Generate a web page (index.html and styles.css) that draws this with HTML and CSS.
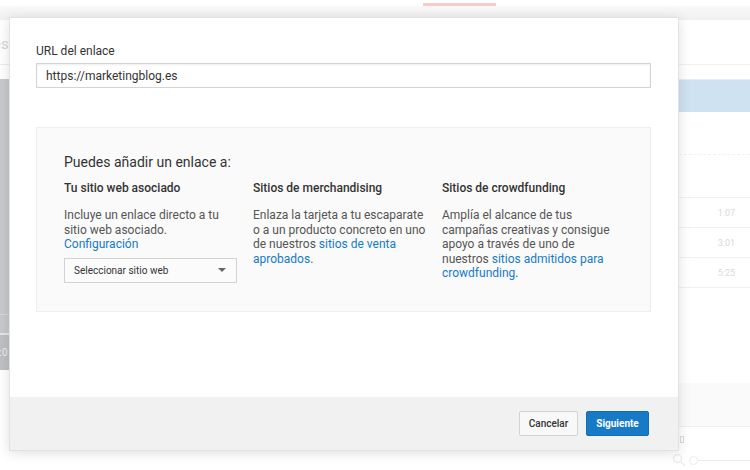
FILE: index.html
```html
<!DOCTYPE html>
<html lang="es">
<head>
<meta charset="utf-8">
<title>Añadir enlace</title>
<link rel="stylesheet" href="styles.css">
</head>
<body>
<div class="page">
  <div class="topbar"><span class="topbar-accent"></span></div>
  <div class="columns">
    <div class="left-col">
      <div class="left-head"><span class="left-title">es</span></div>
      <div class="thumb">
        <div class="thumb-line"></div>
        <div class="thumb-bottom"><span class="thumb-time">0:0</span></div>
      </div>
    </div>
    <div class="mid-col"></div>
    <div class="right-col">
      <div class="r-head"></div>
      <div class="r-selected"></div>
      <div class="r-gap"></div>
      <div class="r-gap2"></div>
      <div class="r-row"><span class="r-time">1:07</span></div>
      <div class="r-row"><span class="r-time">3:01</span></div>
      <div class="r-row"><span class="r-time">5:25</span></div>
      <div class="r-space"></div>
      <div class="r-band"></div>
      <div class="r-tools">
        <span class="r-box"></span>
      </div>
      <div class="r-zoom">
        <svg class="r-mag" width="14" height="14" viewBox="0 0 14 14"><circle cx="5.5" cy="5.5" r="4" fill="none" stroke="#ececec" stroke-width="1.4"/><line x1="8.5" y1="8.5" x2="13" y2="13" stroke="#ececec" stroke-width="1.6"/></svg>
        <span class="r-knob"></span>
        <span class="r-track"></span>
      </div>
    </div>
  </div>
</div>

<div class="modal">
  <div class="modal-body">
    <label class="field-label" for="url">URL del enlace</label>
    <input id="url" class="field-input" type="text" value="https://marketingblog.es">

    <div class="info-box">
      <h2 class="info-title">Puedes añadir un enlace a:</h2>
      <div class="info-grid">
        <div class="info-col">
          <h3 class="col-title">Tu sitio web asociado</h3>
          <p class="col-text">Incluye un enlace directo a tu sitio web asociado. <a class="link" href="#">Configuración</a></p>
          <div class="select">
            <span class="select-text">Seleccionar sitio web</span>
            <span class="caret"></span>
          </div>
        </div>
        <div class="info-col">
          <h3 class="col-title">Sitios de merchandising</h3>
          <p class="col-text">Enlaza la tarjeta a tu escaparate o a un producto concreto en uno de nuestros <a class="link" href="#">sitios de venta aprobados</a>.</p>
        </div>
        <div class="info-col">
          <h3 class="col-title">Sitios de crowdfunding</h3>
          <p class="col-text">Amplía el alcance de tus campañas creativas y consigue apoyo a través de uno de nuestros <a class="link" href="#">sitios admitidos para crowdfunding</a>.</p>
        </div>
      </div>
    </div>
  </div>
  <div class="modal-footer">
    <button class="btn btn-default" type="button">Cancelar</button>
    <button class="btn btn-primary" type="button">Siguiente</button>
  </div>
</div>
</body>
</html>
```

FILE: styles.css
```css
* { box-sizing: border-box; }

html, body {
  margin: 0;
  padding: 0;
  width: 750px;
  height: 470px;
  overflow: hidden;
  background: #fff;
  font-family: Roboto, "Liberation Sans", Arial, sans-serif;
}

/* ---------- faded background page ---------- */
.page {
  width: 750px;
  height: 470px;
  display: flex;
  flex-direction: column;
}

.topbar {
  height: 20px;
  flex: 0 0 20px;
  border-top: 6px solid #fff;
  background: linear-gradient(#f9f9f9, #f0f0f0);
  position: relative;
}

.topbar-accent {
  position: absolute;
  left: 423px;
  top: -3px;
  width: 73px;
  height: 3px;
  background: #f6cccc;
}

.columns {
  flex: 1;
  display: flex;
}

.left-col {
  flex: 0 0 10px;
  display: flex;
  flex-direction: column;
  overflow: hidden;
}

.left-head {
  height: 45px;
  border-bottom: 1px solid #ececec;
  display: flex;
  align-items: center;
}

.left-title {
  font-size: 15px;
  color: #d6d6d6;
  margin-left: -7px;
  margin-top: 3px;
}

.thumb {
  margin-top: 14px;
  height: 291px;
  background: #c8c9cd;
  display: flex;
  flex-direction: column;
  justify-content: flex-end;
}

.thumb-line {
  height: 1px;
  background: #d8d8da;
  margin-bottom: 18px;
}

.thumb-bottom {
  height: 37px;
  border-top: 2px solid #e6e6e8;
  background: #bfc0c4;
  display: flex;
  align-items: center;
}

.thumb-time {
  font-size: 10px;
  color: #eeeeee;
  margin-left: -6px;
}

.mid-col { flex: 1; }

.right-col {
  flex: 0 0 71px;
  display: flex;
  flex-direction: column;
}

.r-head {
  height: 45px;
  border-bottom: 1px solid #f1f1f1;
}

.r-selected {
  margin-top: 14px;
  height: 33px;
  background: #cfe2f2;
  border-top: 1px solid #e4eef7;
}

.r-gap {
  height: 43px;
  border-bottom: 1px dashed #f1f1f1;
}

.r-gap2 {
  height: 43px;
  border-bottom: 1px solid #f0f0f0;
}

.r-row {
  height: 30px;
  border-bottom: 1px solid #f0f0f0;
  display: flex;
  align-items: center;
  justify-content: flex-end;
  padding-right: 15px;
}

.r-time {
  font-size: 9px;
  color: #d9d9d9;
}

.r-space { height: 95px; }

.r-band {
  height: 44px;
  background: #fafafa;
  border-bottom: 1px solid #f0f0f0;
}

.r-tools {
  height: 24px;
  display: flex;
  align-items: center;
}

.r-box {
  width: 4px;
  height: 7px;
  border: 1px solid #dcdcdc;
  margin-left: 1px;
}

.r-zoom {
  display: flex;
  align-items: center;
  height: 18px;
}

.r-mag { margin-left: -7px; }

.r-knob {
  width: 9px;
  height: 9px;
  border: 1px solid #ececec;
  border-radius: 50%;
  margin-left: 3px;
  background: #fff;
}

.r-track {
  flex: 1;
  height: 1px;
  background: #ececec;
}

/* ---------- modal ---------- */
.modal {
  position: absolute;
  left: 9px;
  top: 17px;
  width: 670px;
  height: 434px;
  background: #fff;
  border: 1px solid #e2e2e2;
  box-shadow: 0 2px 12px rgba(0, 0, 0, 0.13);
  display: flex;
  flex-direction: column;
}

.modal-body {
  flex: 1;
  padding: 26px 27px 0 26px;
  display: flex;
  flex-direction: column;
}

.field-label {
  display: block;
  font-size: 12px;
  line-height: 15px;
  color: #333;
  font-weight: 400;
}

.field-input {
  margin-top: 4px;
  width: 615px;
  height: 25px;
  border: 1px solid #d3d3d3;
  box-shadow: inset 0 1px 2px #eee;
  padding: 0 9px;
  font-family: inherit;
  font-size: 12px;
  color: #333;
  outline: none;
  border-radius: 0;
}

.info-box {
  margin-top: 39px;
  width: 615px;
  height: 185px;
  background: #fafafa;
  border: 1px solid #eeeeee;
  padding: 26px 20px 0 27px;
}

.info-title {
  margin: 0;
  font-size: 14px;
  line-height: 17px;
  font-weight: 400;
  color: #333;
}

.info-grid {
  margin-top: 10px;
  display: grid;
  grid-template-columns: 173px 173px 173px;
  column-gap: 16px;
}

.col-title {
  margin: 0;
  font-size: 12px;
  line-height: 15px;
  font-weight: 500;
  color: #333;
}

.col-text {
  margin: 12px 0 0;
  font-size: 12px;
  line-height: 14.5px;
  color: #555;
}

.link {
  color: #167ac6;
  text-decoration: none;
}

.select {
  margin-top: 6px;
  width: 173px;
  height: 25px;
  border: 1px solid #d3d3d3;
  background: #fbfbfb;
  display: flex;
  align-items: center;
  justify-content: space-between;
  padding: 0 10px 0 9px;
}

.select-text {
  font-size: 10px;
  color: #333;
}

.caret {
  width: 0;
  height: 0;
  border-left: 4px solid transparent;
  border-right: 4px solid transparent;
  border-top: 4px solid #666;
}

.modal-footer {
  flex: 0 0 53px;
  background: #f1f1f1;
  display: flex;
  justify-content: flex-end;
  align-items: flex-start;
  gap: 8px;
  padding: 14px 29px 0 0;
}

.btn {
  height: 25px;
  font-family: inherit;
  font-size: 10px;
  border-radius: 2px;
  padding: 0 6px;
  cursor: pointer;
}

.btn-default {
  width: 59px;
  background: #f8f8f8;
  border: 1px solid #d3d3d3;
  color: #333;
  font-weight: 500;
}

.btn-primary {
  width: 63px;
  background: #167ac6;
  border: 1px solid #126db3;
  color: #fff;
  font-weight: 700;
}
```
